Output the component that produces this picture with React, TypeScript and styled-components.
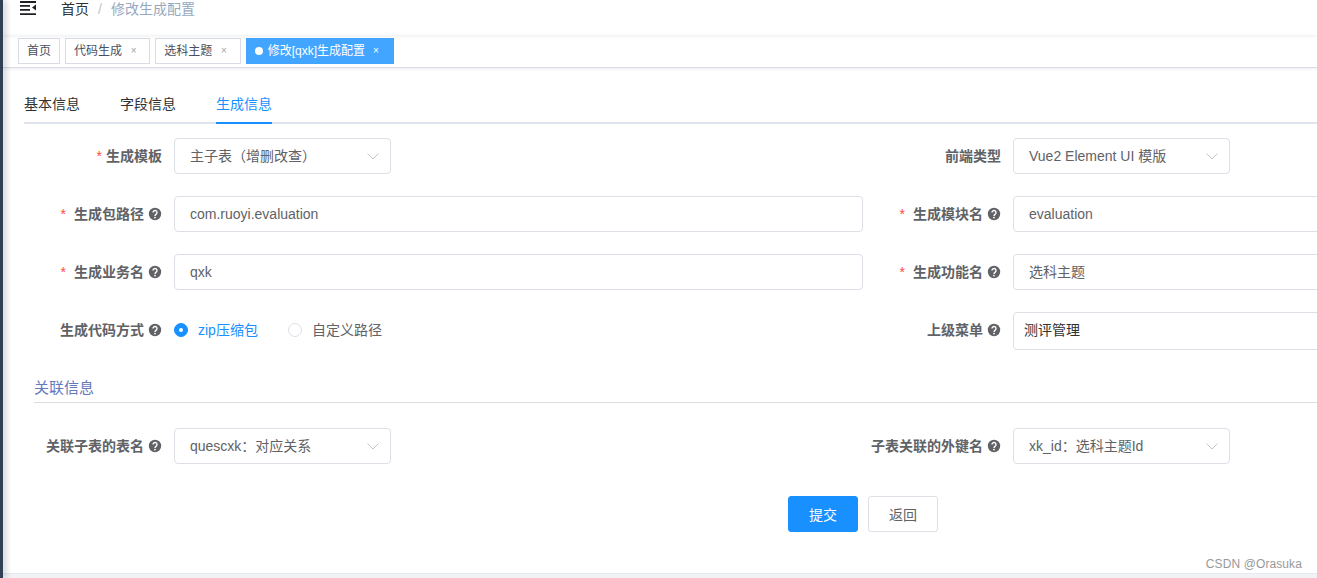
import React from "react";
import styled, { createGlobalStyle } from "styled-components";

const Global = createGlobalStyle`
  html, body { margin: 0; padding: 0; height: 100%; overflow: hidden; background: #fff; }
  body { font-family: "Liberation Sans", "Noto Sans CJK SC", sans-serif; font-size: 14px; color: #606266; }
  #root { height: 578px; }
  * { box-sizing: border-box; }
`;

const Shell = styled.div`
  display: flex;
  width: 1317px;
  height: 578px;
  overflow: hidden;
  position: relative;
  background: #f0f2f5;
`;
const Sidebar = styled.aside`
  width: 3px;
  flex: none;
  background: #304156;
  box-shadow: 2px 0 6px rgba(0, 21, 41, 0.35);
  z-index: 3;
`;
const Main = styled.main`
  flex: 1;
  min-width: 0;
  display: flex;
  flex-direction: column;
`;
const Frame = styled.div`
  height: 574px;
  background: #fff;
  border-bottom: 1px solid #e6e8f2;
  display: flex;
  flex-direction: column;
  overflow: hidden;
`;
const Navbar = styled.header`
  height: 35px;
  flex: none;
  display: flex;
  align-items: flex-start;
  padding-left: 17px;
  box-shadow: 0 1px 4px rgba(0, 21, 41, 0.08);
  position: relative;
  z-index: 2;
`;
const Hamburger = styled.svg`
  width: 16px;
  height: 16px;
  display: block;
`;
const Crumbs = styled.nav`
  margin-left: 25px;
  height: 18px;
  line-height: 18px;
  display: flex;
  font-size: 14px;
`;
const CrumbLink = styled.span`
  color: #303133;
`;
const CrumbSep = styled.span`
  color: #c0c4cc;
  margin: 0 9px;
`;
const CrumbCurrent = styled.span`
  color: #97a8be;
`;
const TagBar = styled.div`
  height: 33px;
  flex: none;
  display: flex;
  align-items: flex-start;
  padding: 3px 0 0 15px;
  gap: 5px;
  border-bottom: 1px solid #d8dce5;
  box-shadow: 0 1px 3px rgba(0, 0, 0, 0.08);
`;
const Tag = styled.div<{ $active?: boolean }>`
  height: 26px;
  line-height: 24px;
  padding: 0 8px;
  font-size: 12px;
  display: flex;
  align-items: center;
  border: 1px solid ${(p) => (p.$active ? "#42a5ff" : "#d8dce5")};
  background: ${(p) => (p.$active ? "#42a5ff" : "#fff")};
  color: ${(p) => (p.$active ? "#fff" : "#495060")};
`;
const TagDot = styled.i`
  width: 8px;
  height: 8px;
  border-radius: 50%;
  background: #fff;
  margin-right: 5px;
`;
const TagClose = styled.span<{ $active?: boolean }>`
  width: ${(p) => (p.$active ? "16.3px" : "15.3px")};
  margin-left: 4px;
  padding-right: ${(p) => (p.$active ? "2.3px" : "0")};
  text-align: center;
  font-size: 10px;
  color: ${(p) => (p.$active ? "#fff" : "#a0a3a8")};
`;
const Body = styled.div`
  padding: 16px 0 0 21px;
  width: 1700px;
`;
const Tabs = styled.div`
  display: flex;
  width: 1293px;
  height: 40px;
  gap: 40px;
  border-bottom: 2px solid #dfe4ed;
`;
const TabItem = styled.div<{ $active?: boolean }>`
  height: 40px;
  line-height: 40px;
  font-size: 14px;
  color: ${(p) => (p.$active ? "#1890ff" : "#303133")};
  border-bottom: 2px solid ${(p) => (p.$active ? "#1890ff" : "transparent")};
`;
const Row = styled.div<{ $mb?: number }>`
  display: flex;
  margin-bottom: ${(p) => p.$mb ?? 22}px;
`;
const FormRows = styled.div`
  margin-top: 14px;
`;
const Field = styled.div`
  width: 839px;
  flex: none;
  display: flex;
  align-items: flex-start;
`;
const Label = styled.label`
  width: 150px;
  flex: none;
  padding-right: 12px;
  display: flex;
  justify-content: flex-end;
  align-items: center;
  font-weight: 700;
  color: #606266;
  height: 36px;
  line-height: 36px;
`;
const Star = styled.span<{ $gap: number }>`
  color: #ff4949;
  font-weight: 400;
  margin-right: ${(p) => p.$gap}px;
`;
const Help = styled.svg`
  width: 14px;
  height: 14px;
  margin-left: 4px;
  flex: none;
`;
const Box = styled.div<{ $tall?: boolean; $narrow?: boolean; $dark?: boolean }>`
  width: ${(p) => (p.$narrow ? "217px" : "689px")};
  height: ${(p) => (p.$tall ? "38px" : "36px")};
  border: 1px solid #dcdfe6;
  border-radius: 4px;
  padding: ${(p) => (p.$tall ? "0 10px 2px" : "0 15px")};
  display: flex;
  align-items: center;
  justify-content: space-between;
  line-height: 34px;
  color: ${(p) => (p.$dark ? "#303133" : "#606266")};
  background: #fff;
`;
const Chevron = styled.svg`
  width: 14px;
  height: 14px;
  margin-right: -5px;
  flex: none;
`;
const RadioGroup = styled.div`
  display: flex;
  align-items: center;
  height: 36px;
  line-height: 36px;
  gap: 30px;
`;
const Radio = styled.div<{ $on?: boolean }>`
  display: flex;
  align-items: center;
  color: ${(p) => (p.$on ? "#1890ff" : "#606266")};
`;
const RadioMark = styled.span<{ $on?: boolean }>`
  width: 14px;
  height: 14px;
  border-radius: 50%;
  margin-right: 10px;
  border: 1px solid ${(p) => (p.$on ? "#1890ff" : "#dcdfe6")};
  background: ${(p) => (p.$on ? "#1890ff" : "#fff")};
  display: flex;
  align-items: center;
  justify-content: center;
  &::after {
    content: "";
    width: 4px;
    height: 4px;
    border-radius: 50%;
    background: #fff;
    display: ${(p) => (p.$on ? "block" : "none")};
  }
`;
const Section = styled.div`
  margin: 28px 0 25px 10px;
  width: 1283px;
  height: 25px;
  line-height: 20px;
  font-size: 15px;
  color: #6379bb;
  border-bottom: 1px solid #ddd;
`;
const Actions = styled.div`
  display: flex;
  gap: 10px;
  padding-left: 764px;
  margin-top: 32px;
`;
const Button = styled.button<{ $primary?: boolean }>`
  width: 70px;
  height: 36px;
  border-radius: 3px;
  font: inherit;
  border: 1px solid ${(p) => (p.$primary ? "#1890ff" : "#dcdfe6")};
  background: ${(p) => (p.$primary ? "#1890ff" : "#fff")};
  color: ${(p) => (p.$primary ? "#fff" : "#606266")};
`;
const Watermark = styled.div`
  position: absolute;
  right: 15px;
  bottom: 7px;
  font-size: 12px;
  letter-spacing: 0.1px;
  color: #999;
  z-index: 4;
`;

const HelpIcon = () => (
  <Help viewBox="0 0 14 14">
    <circle cx="7" cy="7" r="6.2" fill="#606266" />
    <path d="M5 5.5a2 2 0 1 1 3.2 1.6C7.4 7.7 7 8 7 8.9" fill="none" stroke="#fff" strokeWidth="1.4" />
    <circle cx="7" cy="10.6" r="0.9" fill="#fff" />
  </Help>
);
const Down = () => (
  <Chevron viewBox="0 0 14 14">
    <path d="M1.5 4.500 7 10l5.500-5.500" fill="none" stroke="#c0c4cc" strokeWidth="1" />
  </Chevron>
);

type LabelProps = { text: string; req?: boolean; help?: boolean; gap?: number };
const FieldLabel = ({ text, req, help = true, gap = 8 }: LabelProps) => (
  <Label>
    {req && <Star $gap={gap}>*</Star>}
    {text}
    {help && <HelpIcon />}
  </Label>
);

const tags = ["代码生成", "选科主题"];

export default function App() {
  return (
    <Shell>
      <Global />
      <Sidebar />
      <Main>
        <Frame>
          <Navbar>
            <Hamburger viewBox="0 0 16 16">
              <path d="M0 1h16v2H0zM0 5h10v1.800H0zM0 9h10v1.800H0zM0 13.200h16V15H0z" fill="#1f2024" />
              <path d="M16 4.500v6l-4-3z" fill="#1f2024" />
            </Hamburger>
            <Crumbs>
              <CrumbLink>首页</CrumbLink>
              <CrumbSep>/</CrumbSep>
              <CrumbCurrent>修改生成配置</CrumbCurrent>
            </Crumbs>
          </Navbar>
          <TagBar>
            <Tag>首页</Tag>
            {tags.map((t) => (
              <Tag key={t}>
                {t}
                <TagClose>×</TagClose>
              </Tag>
            ))}
            <Tag $active>
              <TagDot />
              修改[qxk]生成配置
              <TagClose $active>×</TagClose>
            </Tag>
          </TagBar>
          <Body>
            <Tabs>
              <TabItem>基本信息</TabItem>
              <TabItem>字段信息</TabItem>
              <TabItem $active>生成信息</TabItem>
            </Tabs>
            <FormRows>
              <Row>
                <Field>
                  <FieldLabel text="生成模板" req help={false} gap={4} />
                  <Box $narrow>主子表（增删改查）<Down /></Box>
                </Field>
                <Field>
                  <FieldLabel text="前端类型" help={false} />
                  <Box $narrow>Vue2 Element UI 模版<Down /></Box>
                </Field>
              </Row>
              <Row>
                <Field>
                  <FieldLabel text="生成包路径" req />
                  <Box>com.ruoyi.evaluation</Box>
                </Field>
                <Field>
                  <FieldLabel text="生成模块名" req />
                  <Box>evaluation</Box>
                </Field>
              </Row>
              <Row>
                <Field>
                  <FieldLabel text="生成业务名" req />
                  <Box>qxk</Box>
                </Field>
                <Field>
                  <FieldLabel text="生成功能名" req />
                  <Box>选科主题</Box>
                </Field>
              </Row>
              <Row $mb={0}>
                <Field>
                  <FieldLabel text="生成代码方式" />
                  <RadioGroup>
                    <Radio $on><RadioMark $on />zip压缩包</Radio>
                    <Radio><RadioMark />自定义路径</Radio>
                  </RadioGroup>
                </Field>
                <Field>
                  <FieldLabel text="上级菜单" />
                  <Box $tall $dark>测评管理</Box>
                </Field>
              </Row>
            </FormRows>
            <Section>关联信息</Section>
            <Row $mb={0}>
              <Field>
                <FieldLabel text="关联子表的表名" />
                <Box $narrow>quescxk：对应关系<Down /></Box>
              </Field>
              <Field>
                <FieldLabel text="子表关联的外键名" />
                <Box $narrow>xk_id：选科主题Id<Down /></Box>
              </Field>
            </Row>
            <Actions>
              <Button $primary>提交</Button>
              <Button>返回</Button>
            </Actions>
          </Body>
        </Frame>
      </Main>
      <Watermark>CSDN @Orasuka</Watermark>
    </Shell>
  );
}
